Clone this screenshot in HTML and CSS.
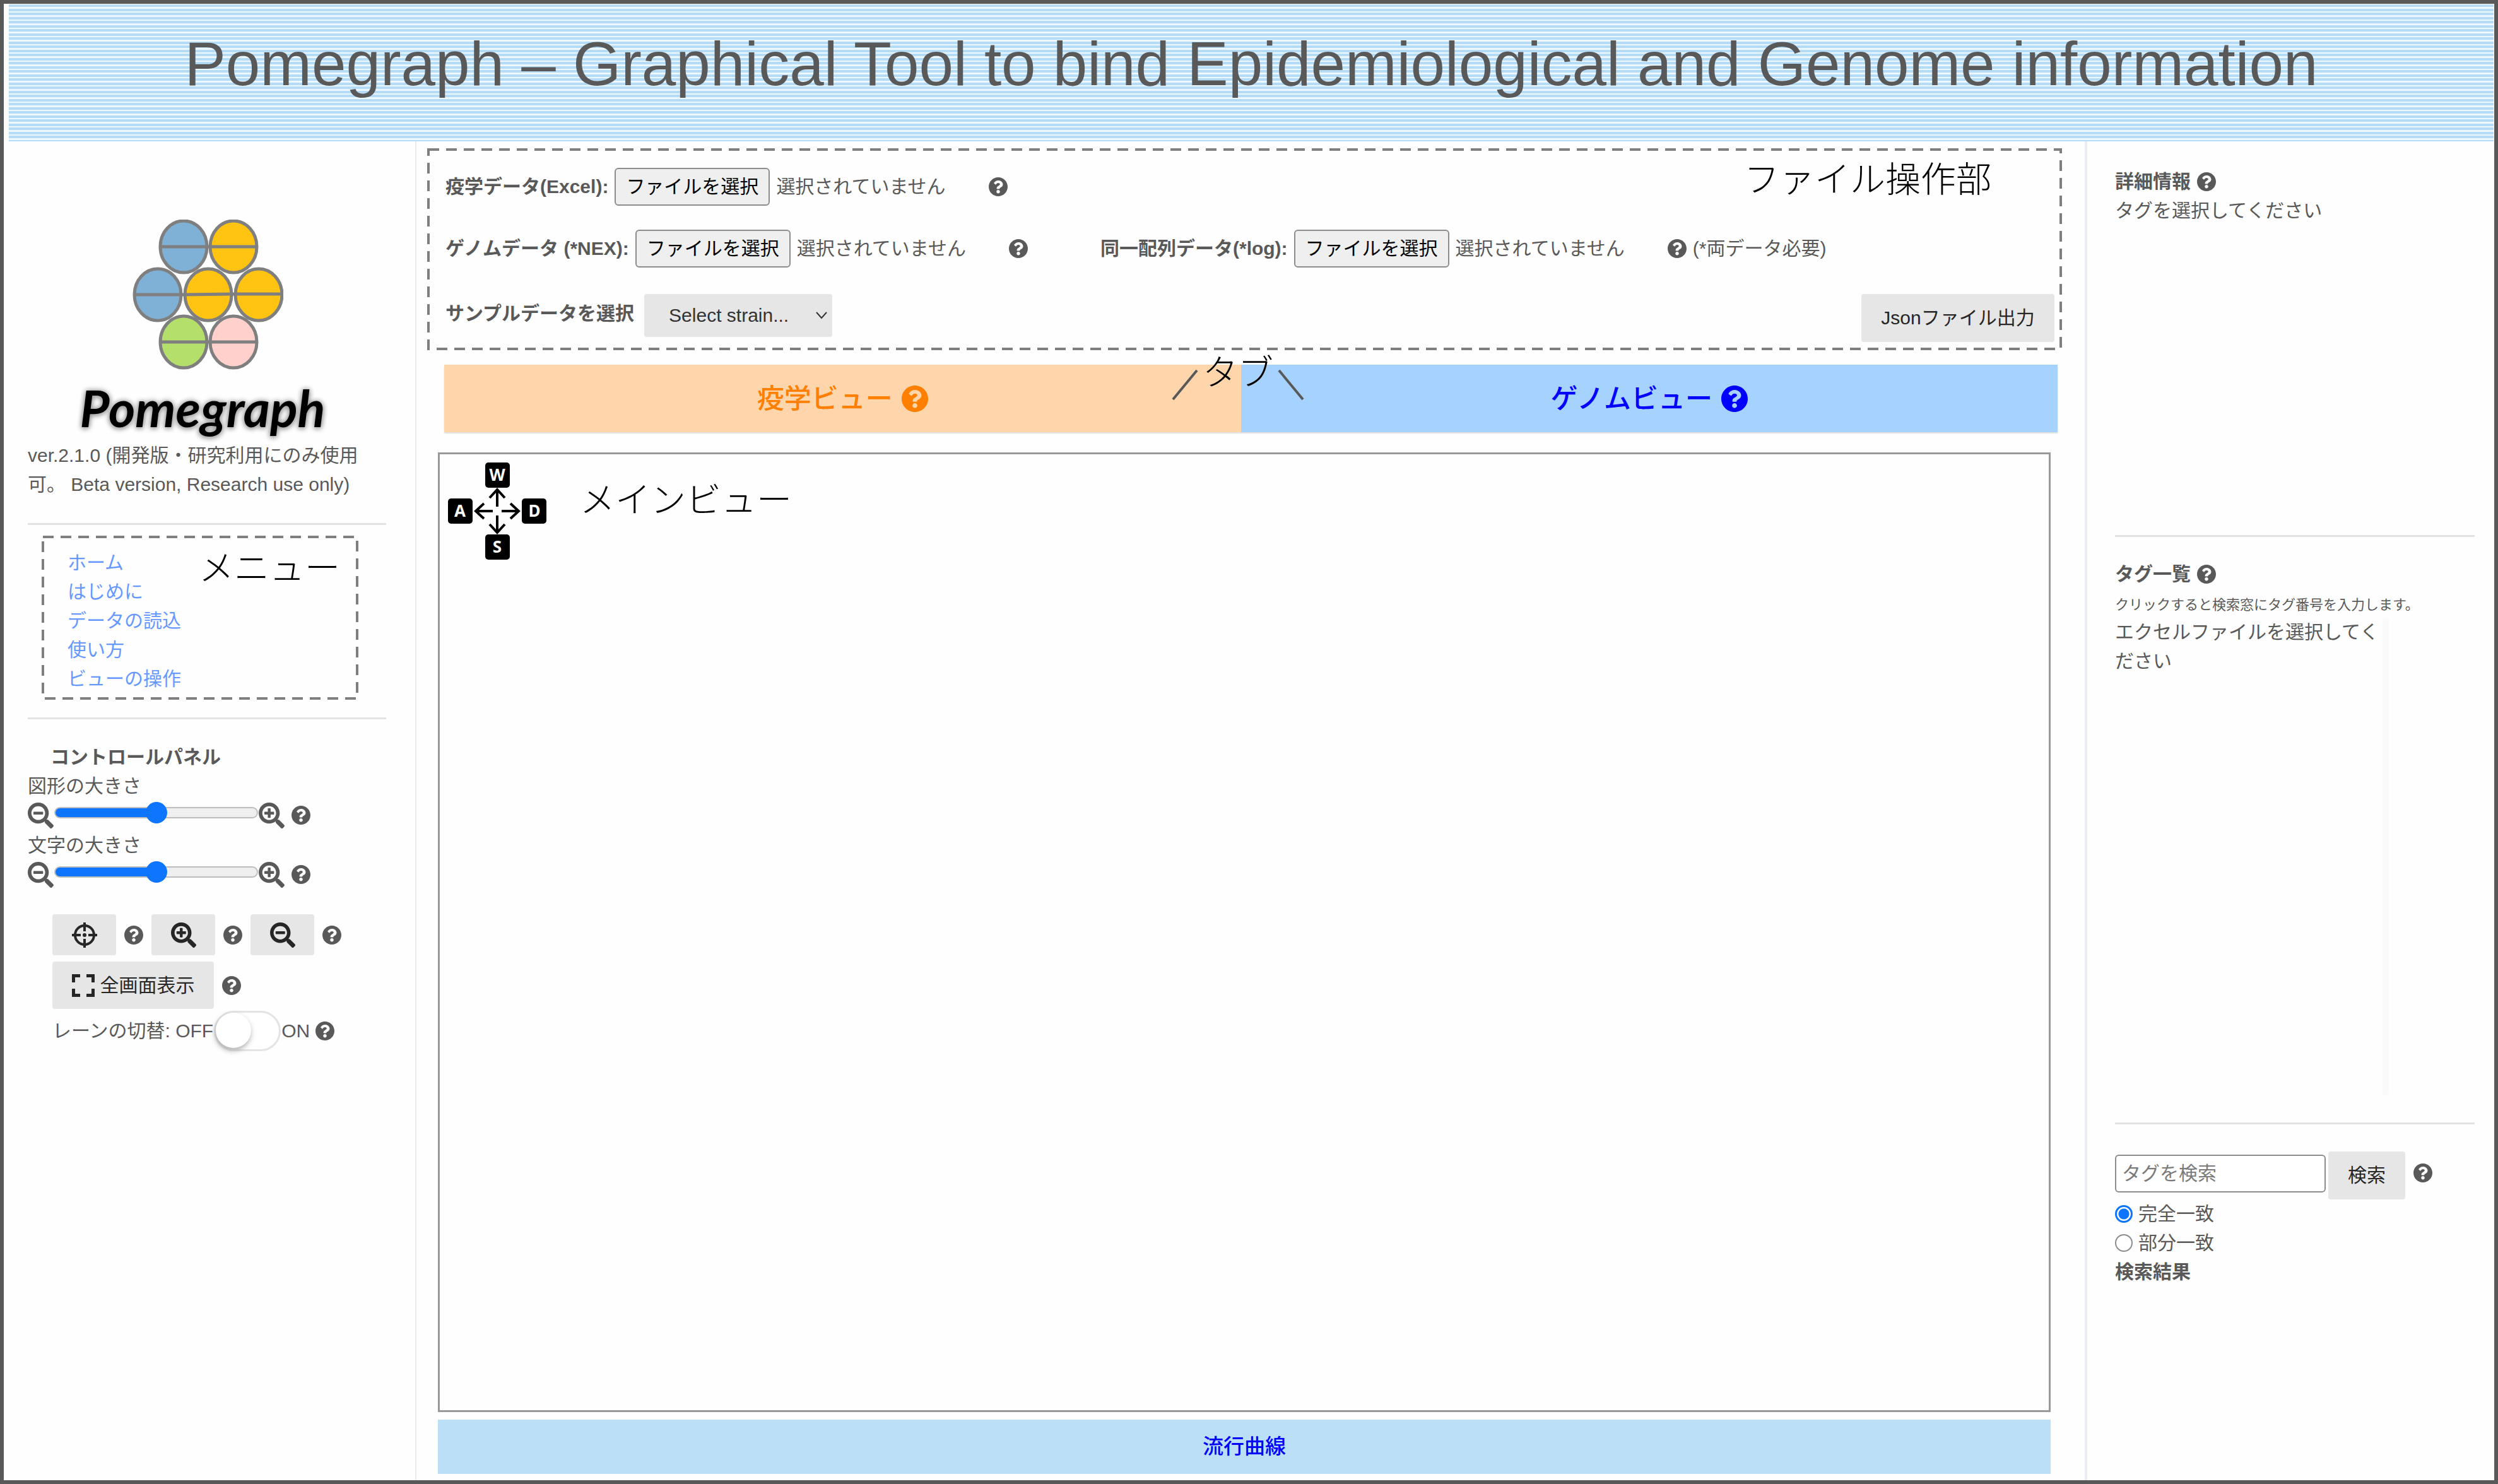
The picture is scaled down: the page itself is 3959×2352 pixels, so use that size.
FILE: index.html
```html
<!DOCTYPE html>
<html lang="ja">
<head>
<meta charset="utf-8">
<meta name="viewport" content="width=device-width, initial-scale=1">
<title>Pomegraph</title>
<link rel="stylesheet" href="styles.css">
</head>
<body>
<svg class="sprite" aria-hidden="true">
  <symbol id="i-help" viewBox="8 8 496 496"><path d="M504 256c0 136.997-111.043 248-248 248S8 392.997 8 256C8 119.083 119.043 8 256 8s248 111.083 248 248zM262.655 90c-54.497 0-89.255 22.957-116.549 63.758-3.536 5.286-2.353 12.415 2.715 16.258l34.699 26.31c5.205 3.947 12.621 3.008 16.665-2.122 17.864-22.658 30.113-35.797 57.303-35.797 20.429 0 45.698 13.148 45.698 32.958 0 14.976-12.363 22.667-32.534 33.976C247.128 238.528 216 254.941 216 296v4c0 6.627 5.373 12 12 12h56c6.627 0 12-5.373 12-12v-1.333c0-28.462 83.186-29.647 83.186-106.667 0-58.002-60.165-102-116.531-102zM256 338c-25.365 0-46 20.635-46 46 0 25.364 20.635 46 46 46s46-20.636 46-46c0-25.364-20.635-46-46-46z"/></symbol>
  <symbol id="i-plus" viewBox="0 0 512 512"><path d="M304 192v32c0 6.600-5.400 12-12 12h-56v56c0 6.600-5.400 12-12 12h-32c-6.600 0-12-5.400-12-12v-56h-56c-6.600 0-12-5.400-12-12v-32c0-6.600 5.400-12 12-12h56v-56c0-6.600 5.400-12 12-12h32c6.600 0 12 5.400 12 12v56h56c6.600 0 12 5.400 12 12zm201 284.700L476.700 505c-9.400 9.400-24.600 9.400-33.900 0L343 405.300c-4.500-4.500-7-10.600-7-17V372c-35.300 27.600-79.700 44-128 44C93.100 416 0 322.900 0 208S93.100 0 208 0s208 93.100 208 208c0 48.300-16.400 92.700-44 128h16.300c6.400 0 12.500 2.500 17 7l99.700 99.700c9.300 9.400 9.300 24.600 0 34zM344 208c0-75.200-60.800-136-136-136S72 132.800 72 208s60.800 136 136 136 136-60.800 136-136z"/></symbol>
  <symbol id="i-minus" viewBox="0 0 512 512"><path d="M304 192v32c0 6.600-5.400 12-12 12H124c-6.600 0-12-5.400-12-12v-32c0-6.600 5.400-12 12-12h168c6.600 0 12 5.400 12 12zm201 284.700L476.700 505c-9.400 9.400-24.600 9.400-33.900 0L343 405.300c-4.500-4.500-7-10.600-7-17V372c-35.300 27.600-79.700 44-128 44C93.100 416 0 322.900 0 208S93.100 0 208 0s208 93.100 208 208c0 48.300-16.400 92.700-44 128h16.300c6.400 0 12.500 2.500 17 7l99.700 99.700c9.300 9.400 9.300 24.600 0 34zM344 208c0-75.200-60.800-136-136-136S72 132.800 72 208s60.800 136 136 136 136-60.800 136-136z"/></symbol>
  <symbol id="i-target" viewBox="0 0 40 40"><g fill="none" stroke="currentColor" stroke-width="4"><circle cx="20" cy="20" r="15"/><path d="M20 0v14M20 26v14M0 20h14M26 20h14"/></g><circle cx="20" cy="20" r="3" fill="currentColor"/></symbol>
  <symbol id="i-full" viewBox="0 0 36 36"><path d="M2.500 13V2.500H13M23 2.500h10.500V13M33.500 23v10.500H23M13 33.500H2.500V23" fill="none" stroke="currentColor" stroke-width="5"/></symbol>
</svg>

<div class="frame">
  <header class="banner">
    <h1 class="banner-title">Pomegraph – Graphical Tool to bind Epidemiological and Genome information</h1>
  </header>

  <div class="columns">
    <aside class="side side-left">
      <div class="logo">
        <svg class="logo-mark" viewBox="207 348 242 238" aria-hidden="true">
          <g stroke="#7f7f7f" stroke-width="5">
            <g fill="#7fb0d6"><ellipse cx="291" cy="391" rx="37" ry="41"/><ellipse cx="250" cy="467" rx="37" ry="41"/></g>
            <g fill="#ffc312"><ellipse cx="370" cy="391" rx="37" ry="41"/><ellipse cx="330" cy="467" rx="37" ry="41"/><ellipse cx="410" cy="467" rx="37" ry="41"/></g>
            <ellipse cx="291" cy="542" rx="37" ry="41" fill="#b4df6a"/>
            <ellipse cx="370" cy="542" rx="37" ry="41" fill="#ffd0cc"/>
            <path d="M254 391h153M213 467h77l80-1h77M254 542h153"/>
          </g>
        </svg>
        <div class="logo-name">Pomegraph</div>
      </div>
      <p class="version">ver.2.1.0 (開発版・研究利用にのみ使用可。 Beta version, Research use only)</p>
      <hr class="rule">
      <nav class="menu dashed">
        <svg class="dashes" aria-hidden="true"><rect x="2" y="2" width="100%" height="100%"/></svg>
        <a href="#home">ホーム</a>
        <a href="#intro">はじめに</a>
        <a href="#load">データの読込</a>
        <a href="#usage">使い方</a>
        <a href="#views">ビューの操作</a>
        <span class="note note-menu">メニュー</span>
      </nav>
      <hr class="rule rule-after-menu">

      <section class="controls">
        <h2 class="heading controls-title">コントロールパネル</h2>
        <label for="shape-size">図形の大きさ</label>
        <div class="slider-row">
          <svg class="zoom-icon"><use href="#i-minus"/></svg>
          <input class="slider" id="shape-size" type="range" value="50">
          <svg class="zoom-icon"><use href="#i-plus"/></svg>
          <svg class="help"><use href="#i-help"/></svg>
        </div>
        <label for="text-size">文字の大きさ</label>
        <div class="slider-row">
          <svg class="zoom-icon"><use href="#i-minus"/></svg>
          <input class="slider" id="text-size" type="range" value="50">
          <svg class="zoom-icon"><use href="#i-plus"/></svg>
          <svg class="help"><use href="#i-help"/></svg>
        </div>
        <div class="tools">
          <div class="tool-row">
            <button class="btn btn-icon" type="button" aria-label="中央に戻す"><svg class="tool-icon"><use href="#i-target"/></svg></button>
            <svg class="help"><use href="#i-help"/></svg>
            <button class="btn btn-icon" type="button" aria-label="拡大"><svg class="tool-icon"><use href="#i-plus"/></svg></button>
            <svg class="help"><use href="#i-help"/></svg>
            <button class="btn btn-icon" type="button" aria-label="縮小"><svg class="tool-icon"><use href="#i-minus"/></svg></button>
            <svg class="help"><use href="#i-help"/></svg>
          </div>
          <div class="tool-row">
            <button class="btn btn-full" type="button"><svg class="full-icon"><use href="#i-full"/></svg>全画面表示</button>
            <svg class="help"><use href="#i-help"/></svg>
          </div>
          <div class="lane-row">
            <label for="lane">レーンの切替: OFF</label>
            <input class="switch" id="lane" type="checkbox">
            <span>ON</span>
            <svg class="help"><use href="#i-help"/></svg>
          </div>
        </div>
      </section>
    </aside>

    <main class="main">
      <section class="files dashed">
        <svg class="dashes" aria-hidden="true"><rect x="2" y="2" width="100%" height="100%"/></svg>
        <div class="file-row">
          <div class="file-group">
            <label class="file-label" for="excel">疫学データ(Excel):</label>
            <span class="file"><span class="file-button">ファイルを選択</span><span>選択されていません</span><input class="file-input" id="excel" type="file"></span>
            <svg class="help"><use href="#i-help"/></svg>
          </div>
        </div>
        <div class="file-row">
          <div class="file-group">
            <label class="file-label" for="nex">ゲノムデータ (*NEX):</label>
            <span class="file"><span class="file-button">ファイルを選択</span><span>選択されていません</span><input class="file-input" id="nex" type="file"></span>
            <svg class="help"><use href="#i-help"/></svg>
          </div>
          <div class="file-group">
            <label class="file-label" for="log">同一配列データ(*log):</label>
            <span class="file"><span class="file-button">ファイルを選択</span><span>選択されていません</span><input class="file-input" id="log" type="file"></span>
            <svg class="help"><use href="#i-help"/></svg>
            <span class="file-hint">(*両データ必要)</span>
          </div>
        </div>
        <div class="sample-row">
          <label class="file-label" for="strain">サンプルデータを選択</label>
          <span class="select-box">
            <select class="select" id="strain"><option>Select strain...</option></select>
            <svg class="chevron" viewBox="0 0 18 12" aria-hidden="true"><path d="M1 1l8 9 8-9" fill="none" stroke="#333" stroke-width="2"/></svg>
          </span>
          <button class="btn btn-json" type="button">Jsonファイル出力</button>
        </div>
        <span class="note note-files">ファイル操作部</span>
      </section>

      <div class="tabs">
        <button class="tab tab-epi" type="button">疫学ビュー<svg class="tab-help"><use href="#i-help"/></svg></button>
        <button class="tab tab-genome" type="button">ゲノムビュー<svg class="tab-help"><use href="#i-help"/></svg></button>
        <div class="tab-note">
          <svg class="tab-line" viewBox="0 0 42 50" aria-hidden="true"><path d="M40 2L2 48" stroke="#595959" stroke-width="4"/></svg>
          <span class="note">タブ</span>
          <svg class="tab-line" viewBox="0 0 42 50" aria-hidden="true"><path d="M2 2l38 46" stroke="#595959" stroke-width="4"/></svg>
        </div>
      </div>

      <section class="view">
        <svg class="keys" viewBox="0 0 156 154" role="img" aria-label="WASD">
          <rect x="59" y="0" width="39" height="40" rx="5"/>
          <rect x="0" y="57" width="39" height="40" rx="5"/>
          <rect x="117" y="57" width="39" height="40" rx="5"/>
          <rect x="59" y="114" width="39" height="40" rx="5"/>
          <path class="key-arrows" d="M78 70V44M66 56l12-13 12 13M78 84v26M66 98l12 13 12-13M71 77H45M57 65L44 77l13 12M85 77h26M99 65l13 12-13 12"/>
          <g class="key-letters"><text x="78" y="29">W</text><text x="19" y="86">A</text><text x="137" y="86">D</text><text x="78" y="143">S</text></g>
        </svg>
        <span class="note">メインビュー</span>
      </section>

      <button class="curve" type="button">流行曲線</button>
    </main>

    <aside class="side side-right">
      <section class="detail">
        <h2 class="heading">詳細情報<svg class="help"><use href="#i-help"/></svg></h2>
        <p>タグを選択してください</p>
      </section>
      <hr class="rule">
      <section class="tags">
        <h2 class="heading">タグ一覧<svg class="help"><use href="#i-help"/></svg></h2>
        <p class="tags-hint">クリックすると検索窓にタグ番号を入力します。</p>
        <div class="tag-list"><p class="tag-text">エクセルファイルを選択してください</p><div class="scrollbar"></div></div>
      </section>
      <hr class="rule">
      <form class="search">
        <div class="search-row">
          <input class="search-box" type="text" placeholder="タグを検索" aria-label="タグを検索">
          <button class="btn btn-search" type="button">検索</button>
          <svg class="help"><use href="#i-help"/></svg>
        </div>
        <label class="radio-row"><input class="radio" type="radio" name="match" checked>完全一致</label>
        <label class="radio-row"><input class="radio" type="radio" name="match">部分一致</label>
        <h2 class="heading">検索結果</h2>
      </form>
    </aside>
  </div>
</div>
</body>
</html>
```
FILE: styles.css
```css
* { box-sizing: border-box; }

body {
  margin: 0;
  background: #fefefe;
  color: #595959;
  font: 30px/46px "Liberation Sans", "Noto Sans CJK JP", sans-serif;
}

h1, h2, p { margin: 0; font-weight: 400; }
button, input, select { font: inherit; margin: 0; }
label { display: block; }
svg { display: block; flex: none; fill: currentColor; }
.sprite { position: absolute; width: 0; height: 0; }

.frame {
  display: flex;
  flex-direction: column;
  min-height: 100vh;
  border: 6px solid #595959;
  padding: 1px 1px 0 8px;
}

/* Banner */
.banner {
  height: 217px;
  padding-top: 34px;
  background: repeating-linear-gradient(#b4dcf7 0 4px, #edf7fe 4px 7px, #b4dcf7 7px 11px, #edf7fe 11px 13px);
}
.banner-title { font-size: 98px; line-height: 120px; text-align: center; }

.columns {
  flex: 1;
  display: grid;
  grid-template-columns: 646px 1fr 648px;
}

/* Shared pieces */
.help { width: 30px; height: 30px; color: #595959; }
.heading { display: flex; align-items: center; gap: 10px; font-size: 30px; font-weight: 700; }
.rule { width: 100%; height: 3px; margin: 0; border: 0; background: #e2e2e2; }
.note { color: #000; font-size: 56px; line-height: 60px; font-weight: 300; font-family: "Noto Sans CJK JP", sans-serif; white-space: nowrap; }
.btn {
  display: flex;
  align-items: center;
  justify-content: center;
  padding: 0;
  border: 0;
  border-radius: 4px;
  background: #e6e6e6;
  color: #262626;
}
.dashed { position: relative; }
.dashes {
  position: absolute;
  inset: 0 4px 4px 0;
  width: calc(100% - 4px);
  height: calc(100% - 4px);
  overflow: visible;
  pointer-events: none;
}
.dashes rect { fill: none; stroke: #7f7f7f; stroke-width: 4px; stroke-dasharray: 17px 11px; }

/* Left column */
.side-left { padding: 124px 46px 0 30px; border-right: 2px solid #e8ebf0; }
.logo { display: flex; flex-direction: column; align-items: center; }
.logo-mark { width: 242px; height: 238px; }
.logo-name {
  margin: 12px 0 5px;
  padding-right: 14px;
  color: #000;
  font: italic 700 81px/96px Lato, sans-serif;
  text-shadow: 0 0 8px #999, 0 2px 8px #999;
}
.version { margin-bottom: 38px; }
.menu {
  display: flex;
  flex-direction: column;
  align-items: flex-start;
  width: 502px;
  margin: 17px 0 28px 22px;
  padding: 20px 0 10px 41px;
}
.menu a { color: #6699ff; text-decoration: none; }
.note-menu { position: absolute; top: 17px; right: 29px; }
.controls { padding-top: 37px; }
.controls-title { padding-left: 36px; }
.slider-row { display: flex; align-items: center; gap: 1px; height: 48px; padding-bottom: 2px; }
.slider-row .help { margin-left: 10px; }
.zoom-icon { width: 41px; height: 41px; }
.slider {
  appearance: none;
  width: 323px;
  height: 18px;
  margin-bottom: 8px;
  border: 2px solid #bdbdbd;
  border-radius: 9px;
  background: linear-gradient(90deg, #0d75ff 50%, #efefef 50%) border-box;
}
.slider::-webkit-slider-thumb { appearance: none; width: 34px; height: 34px; border-radius: 50%; background: #0d75ff; }
.tools { display: flex; flex-direction: column; gap: 10px; padding: 38px 0 0 39px; }
.tool-row { display: flex; align-items: center; gap: 13px; }
.btn-icon { width: 101px; height: 65px; }
.tool-icon { width: 40px; height: 40px; }
.btn-full { width: 256px; height: 75px; gap: 9px; }
.full-icon { width: 36px; height: 36px; }
.lane-row { display: flex; align-items: center; gap: 1px; height: 50px; }
.lane-row .help { margin-left: 8px; }
.switch {
  appearance: none;
  width: 106px;
  height: 64px;
  border: 3px solid #e4e4e4;
  border-radius: 32px;
  background: #fff;
}
.switch::before {
  content: "";
  display: block;
  width: 56px;
  height: 56px;
  border-radius: 50%;
  background: #fff;
  box-shadow: -1px 4px 8px #aaa;
}

/* Main column */
.main { display: flex; flex-direction: column; padding: 11px 0 10px; }
.files {
  display: flex;
  flex-direction: column;
  gap: 38px;
  margin: 0 36px 0 17px;
  padding: 31px 12px 13px 29px;
}
.file-row { display: flex; gap: 115px; height: 60px; }
.file-group { display: flex; align-items: center; gap: 10px; }
.file-label { font-weight: 700; }
.file { position: relative; display: flex; align-items: center; gap: 10px; margin-right: 58px; }
.file-button {
  height: 60px;
  padding: 5px 16px 0;
  border: 2px solid #8c8c8c;
  border-radius: 6px;
  background: #efefef;
  color: #000;
}
.file-input { position: absolute; inset: 0; width: 100%; opacity: 0; }
.sample-row { display: flex; align-items: flex-start; height: 80px; padding-top: 4px; }
.sample-row .file-label { padding-top: 8px; }
.select-box { position: relative; margin-left: 16px; }
.select {
  appearance: none;
  display: block;
  width: 298px;
  height: 68px;
  padding: 0 39px;
  border: 0;
  border-radius: 4px;
  background: #e6e6e6;
  color: #333;
}
.chevron { position: absolute; top: 28px; right: 8px; width: 18px; height: 12px; }
.btn-json { width: 306px; height: 76px; margin-left: auto; }
.note-files { position: absolute; top: 15px; right: 112px; }

.tabs { position: relative; display: flex; height: 107px; margin: 23px 43px 0 44px; box-shadow: 0 2px 2px #ddd; }
.tab {
  display: flex;
  flex: 1262;
  align-items: center;
  justify-content: center;
  gap: 14px;
  padding: 0;
  border: 0;
  font-size: 43px;
  font-weight: 500;
}
.tab-epi { background: #ffd6ac; color: #ff7f00; }
.tab-genome { flex: 1294; background: #a6d2ff; color: #0000ff; }
.tab-help { width: 42px; height: 42px; }
.tab-note { position: absolute; top: -22px; left: 1153px; display: flex; align-items: flex-end; gap: 7px; }
.tab-line { width: 42px; height: 50px; margin-bottom: -19px; }

.view {
  flex: 1;
  display: flex;
  align-items: flex-start;
  gap: 53px;
  margin: 32px 54px 0 34px;
  padding: 13px;
  border: 3px solid #999;
}
.view .note { padding-top: 25px; }
.keys { width: 156px; height: 154px; fill: #000; }
.key-arrows { fill: none; stroke: #000; stroke-width: 4px; }
.key-letters { fill: #fff; font: 700 26px "Noto Sans", sans-serif; text-anchor: middle; }
.curve { height: 86px; margin: 12px 54px 0 34px; padding: 0; border: 0; background: #bbdff7; color: #0000ff; font-size: 33px; font-weight: 500; }

/* Right column */
.side-right { display: flex; flex-direction: column; padding: 41px 30px 0 44px; border-left: 4px solid #e8eef4; }
.detail { height: 583px; }
.tags { height: 928px; padding-top: 36px; }
.tags-hint { padding-top: 6px; font-size: 22px; line-height: 40px; }
.tag-list { display: flex; height: 758px; }
.tag-text { width: 424px; }
.scrollbar { width: 10px; border-radius: 5px; background: #fafafa; }
.search { padding-top: 43px; }
.search-row { display: flex; align-items: center; gap: 4px; height: 76px; }
.search-row .help { margin: 0 0 8px 9px; }
.search-box { width: 334px; height: 60px; margin-bottom: 6px; padding: 0 9px; border: 2px solid #8c8c8c; border-radius: 6px; background: #fff; }
.search-box::placeholder { color: #7a7a7a; }
.btn-search { width: 122px; height: 76px; }
.radio-row { display: flex; align-items: center; gap: 9px; }
.radio {
  appearance: none;
  width: 28px;
  height: 28px;
  border: 2px solid #8c8c8c;
  border-radius: 50%;
  background: #fff;
}
.radio:checked {
  border: 3px solid #0d75ff;
  background: radial-gradient(circle, #0d75ff 8px, #fff 9px);
}
```
